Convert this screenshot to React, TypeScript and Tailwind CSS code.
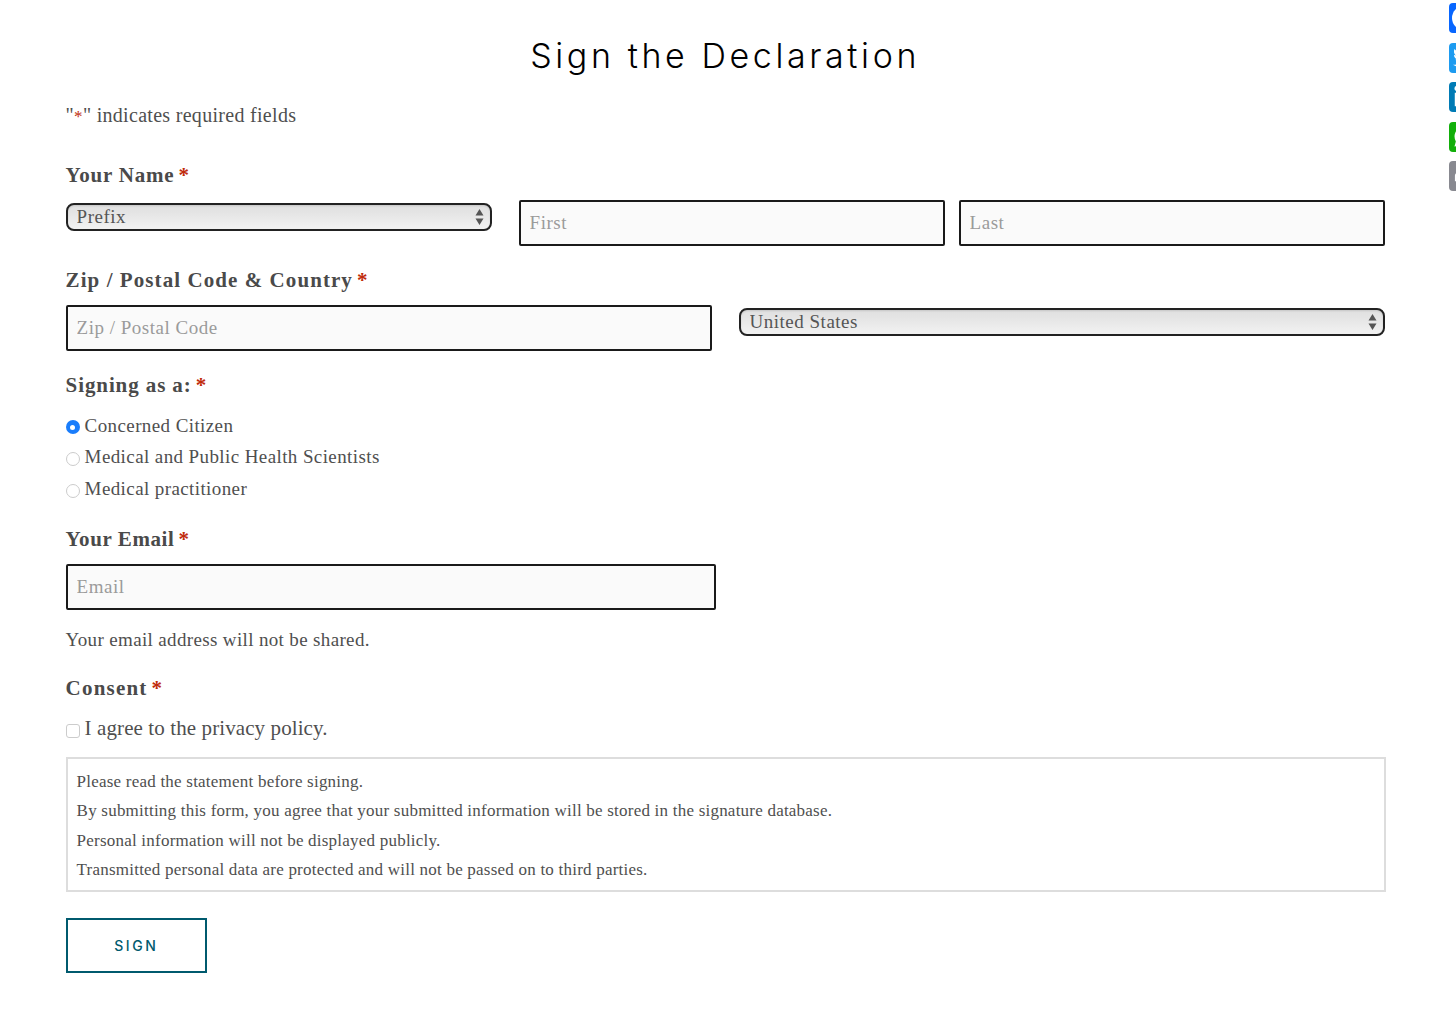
import { FaLinkedinIn, FaTwitter, FaWhatsapp } from "react-icons/fa";
import { MdPrint } from "react-icons/md";

const serif = "font-['Liberation_Serif','Times_New_Roman',serif]";

function Req() {
  return <span className="ml-[4px] text-[#c02b0a] font-bold">*</span>;
}

function FieldLabel({ text, className = "" }: { text: string; className?: string }) {
  return (
    <div className={`text-[21px] leading-[24px] font-bold text-[#4a4a4a] ${className}`}>
      {text}
      <Req />
    </div>
  );
}

function TextBox({ placeholder, className = "" }: { placeholder: string; className?: string }) {
  return (
    <input
      placeholder={placeholder}
      className={`h-[46px] border-[2px] border-[#1a1a1a] rounded-[2px] bg-[#fafafa] px-[9px] text-[19px] tracking-[0.5px] outline-none placeholder:text-[#9b9b9b] ${className}`}
    />
  );
}

function SelectBox({ value, className = "" }: { value: string; className?: string }) {
  return (
    <div className={`relative h-[28px] border-[2px] border-[#222] rounded-[8px] bg-[linear-gradient(#e0e0e0,#e4e4e4_30%,#f2f2f2)] shadow-[inset_0_1px_2px_rgba(0,0,0,0.12)] ${className}`}>
      <select className="w-full h-full appearance-none bg-transparent pl-[9px] text-[19px] leading-[22px] tracking-[0.5px] text-[#555] outline-none">
        <option>{value}</option>
      </select>
      <svg className="absolute right-[6px] top-[3px]" width="9" height="18" viewBox="0 0 9 18">
        <path d="M4.5 1 L8.5 7.5 H0.5 Z M0.5 10.5 H8.5 L4.5 17 Z" fill="#555" />
      </svg>
    </div>
  );
}

function Radio({ label, checked = false }: { label: string; checked?: boolean }) {
  return (
    <label className="flex items-center h-[31.7px] text-[19px] text-[#4f4f4f] tracking-[0.4px]">
      {checked ? (
        <span className="mt-[3px] w-[14px] h-[14px] rounded-full bg-[#1a7dfb] flex items-center justify-center">
          <span className="w-[5px] h-[5px] rounded-full bg-white" />
        </span>
      ) : (
        <span className="mt-[3px] w-[14px] h-[14px] rounded-full border border-[#ccc] bg-white" />
      )}
      <span className="ml-[5px]">{label}</span>
    </label>
  );
}

function ShareRail() {
  const box = "w-[30px] h-[30px] shrink-0 rounded-[4px] flex items-center justify-center text-white text-[23px]";
  return (
    <div className="absolute right-0 top-[3px] w-[7px] overflow-hidden flex flex-col gap-[9.5px]">
      <div className={`${box} bg-[#0866ff]`}>
        <span className="w-[24px] h-[24px] rounded-full bg-white" />
      </div>
      <div className={`${box} bg-[#1d9bf0]`}><FaTwitter /></div>
      <div className={`${box} bg-[#007bb5]`}><FaLinkedinIn /></div>
      <div className={`${box} bg-[#12af0a]`}><FaWhatsapp /></div>
      <div className={`${box} bg-[#888990]`}><MdPrint /></div>
    </div>
  );
}

export default function App() {
  return (
    <div className={`relative min-h-[1013px] bg-white overflow-hidden ${serif}`}>
      <ShareRail />
      <div className="w-[1320px] ml-[65.6px] pb-[40px]">
        <h1 className="pt-[35px] pr-[1px] text-center text-[34px] leading-[42px] tracking-[3.6px] text-black font-['Inter',sans-serif] font-light">
          Sign the Declaration
        </h1>
        <p className="mt-[26px] h-[24px] text-[20px] leading-[24px] text-[#4f4f4f] tracking-[0.3px]">
          "<span className="text-[#c02b0a] text-[17px] leading-none">*</span>" indicates required fields
        </p>

        <FieldLabel text="Your Name" className="mt-[36px] tracking-[0.8px]" />
        <div className="mt-[13px] flex items-start">
          <SelectBox value="Prefix" className="w-[426.5px] mt-[3px]" />
          <TextBox placeholder="First" className="w-[426.5px] ml-[26.5px]" />
          <TextBox placeholder="Last" className="w-[426.5px] ml-[13.5px]" />
        </div>

        <FieldLabel text="Zip / Postal Code & Country" className="mt-[22px] tracking-[1.07px]" />
        <div className="mt-[13px] flex items-start">
          <TextBox placeholder="Zip / Postal Code" className="w-[646.5px]" />
          <SelectBox value="United States" className="w-[646.5px] ml-[26.5px] mt-[3px]" />
        </div>

        <FieldLabel text="Signing as a:" className="mt-[22px] tracking-[0.9px]" />
        <div className="mt-[13px]">
          <Radio label="Concerned Citizen" checked />
          <Radio label="Medical and Public Health Scientists" />
          <Radio label="Medical practitioner" />
        </div>

        <FieldLabel text="Your Email" className="mt-[22px] tracking-[0.6px]" />
        <TextBox placeholder="Email" className="block w-[650.5px] mt-[13px]" />
        <p className="mt-[18px] text-[19px] leading-[24px] text-[#4f4f4f] tracking-[0.35px]">
          Your email address will not be shared.
        </p>

        <FieldLabel text="Consent" className="mt-[24px] tracking-[1.2px]" />
        <label className="mt-[15px] flex items-center h-[28px] text-[21px] text-[#4f4f4f] tracking-[0.1px]">
          <span className="mt-[3px] w-[14px] h-[14px] rounded-[3px] border border-[#ccc] bg-white" />
          <span className="ml-[5px]">I agree to the privacy policy.</span>
        </label>

        <div className="mt-[14px] h-[135px] border-[2px] border-[#ddd] px-[9px] pt-[8px] text-[17px] leading-[29.3px] text-[#4f4f4f] tracking-[0.22px]">
          <p>Please read the statement before signing.</p>
          <p>By submitting this form, you agree that your submitted information will be stored in the signature database.</p>
          <p>Personal information will not be displayed publicly.</p>
          <p>Transmitted personal data are protected and will not be passed on to third parties.</p>
        </div>

        <button className="mt-[26px] block w-[141.5px] h-[55px] border-[2px] border-[#005a6e] bg-white text-[14px] font-medium tracking-[2.6px] text-[#005a6e] font-['Inter',sans-serif]">
          SIGN
        </button>
      </div>
    </div>
  );
}
